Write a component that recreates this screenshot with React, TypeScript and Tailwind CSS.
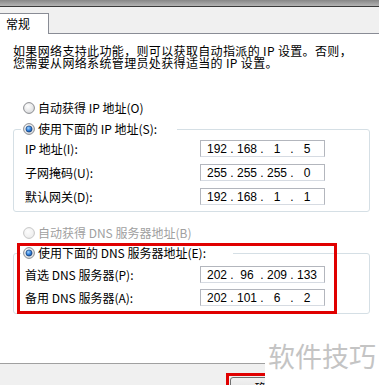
import React from "react";

const Radio = ({ checked, disabled }: { checked?: boolean; disabled?: boolean }) => (
  <svg width="12" height="12" viewBox="0 0 12 12" className="shrink-0">
    <defs>
      <radialGradient id="rbg" cx="0.4" cy="0.35" r="0.7">
        <stop offset="0" stopColor="#ffffff" />
        <stop offset="1" stopColor="#d9dadc" />
      </radialGradient>
      <radialGradient id="rbgd" cx="0.4" cy="0.35" r="0.7">
        <stop offset="0" stopColor="#fdfdfd" />
        <stop offset="1" stopColor="#ececec" />
      </radialGradient>
      <radialGradient id="rdot" cx="0.4" cy="0.35" r="0.7">
        <stop offset="0" stopColor="#9fd3ff" />
        <stop offset="0.6" stopColor="#2b7ad8" />
        <stop offset="1" stopColor="#174e9a" />
      </radialGradient>
    </defs>
    <circle
      cx="6"
      cy="6"
      r="5.4"
      fill={disabled ? "url(#rbgd)" : "url(#rbg)"}
      stroke={disabled ? "#c6c6c6" : "#8a8c90"}
      strokeWidth="1"
    />
    {checked && <circle cx="6" cy="6" r="3.1" fill="url(#rdot)" stroke="#1a3f72" strokeWidth="0.7" />}
  </svg>
);

const IpBox = ({ parts }: { parts: string[] }) => (
  <div className="w-[125px] h-[17px] border border-[#b3b6bd] border-b-[#d6dbe2] bg-white flex items-center pl-[4px] text-[12px] leading-none font-['Liberation_Sans',sans-serif] text-black">
    {parts.map((p, i) => (
      <React.Fragment key={i}>
        <span className="w-[24px] text-center">{p}</span>
        {i < 3 && <span className="w-[6px] text-center">.</span>}
      </React.Fragment>
    ))}
  </div>
);

const Row = ({ label, parts }: { label: string; parts: string[] }) => (
  <div className="flex items-center h-[17px]">
    <div className="w-[175px]">{label}</div>
    <IpBox parts={parts} />
  </div>
);

export default function App() {
  return (
    <div className="relative w-[379px] h-[385px] overflow-hidden bg-white flex flex-col font-['Noto_Sans_CJK_SC',sans-serif] text-[12px] leading-[16px] text-black">
      {/* window top edge */}
      <div className="h-[6px] bg-gradient-to-b from-[#878787] to-[#b4b4b4]" />
      <div className="h-[1px] bg-[#3a3a3a]" />
      {/* tab strip */}
      <div className="h-[27px] bg-[#f0f0f0] flex items-end">
        <div className="w-[49px] h-[21px] bg-white border-t border-r border-[#898c95] pl-[6px] flex items-center text-[12px]">
          常规
        </div>
        <div className="flex-1 h-full border-b border-[#898c95]" />
      </div>
      {/* content */}
      <div className="flex-1 px-[13px] pr-[9px]">
        <p className="mt-[11px] leading-[12px] tracking-[0.35px] whitespace-nowrap">
          如果网络支持此功能，则可以获取自动指派的 IP 设置。否则，
          <br />
          您需要从网络系统管理员处获得适当的 IP 设置。
        </p>
        <div className="mt-[31px] h-[16px] flex items-center gap-[3px] pl-[10px]">
          <Radio />
          <span>自动获得 IP 地址(O)</span>
        </div>
        <fieldset className="mt-[5px] border border-[#d5dfe5] rounded-[3px]">
          <legend className="ml-[7px] px-[2px] w-[156px]">
            <div className="h-[16px] flex items-center gap-[3px]">
              <Radio checked />
              <span>使用下面的 IP 地址(S):</span>
            </div>
          </legend>
          <div className="pl-[11px] pt-[3px] pb-[6px] flex flex-col gap-[7px]">
            <Row label="IP 地址(I):" parts={["192", "168", "1", "5"]} />
            <Row label="子网掩码(U):" parts={["255", "255", "255", "0"]} />
            <Row label="默认网关(D):" parts={["192", "168", "1", "1"]} />
          </div>
        </fieldset>
        <div className="mt-[13px] h-[16px] flex items-center gap-[3px] pl-[10px] text-[#a0a0a0]">
          <Radio disabled />
          <span>自动获得 DNS 服务器地址(B)</span>
        </div>
        <fieldset className="mt-[4px] border border-[#d5dfe5] rounded-[3px]">
          <legend className="ml-[7px] px-[2px] w-[212px]">
            <div className="h-[16px] flex items-center gap-[3px]">
              <Radio checked />
              <span>使用下面的 DNS 服务器地址(E):</span>
            </div>
          </legend>
          <div className="pl-[11px] pt-[5px] pb-[7px] flex flex-col gap-[6px]">
            <Row label="首选 DNS 服务器(P):" parts={["202", "96", "209", "133"]} />
            <Row label="备用 DNS 服务器(A):" parts={["202", "101", "6", "2"]} />
          </div>
        </fieldset>
      </div>
      {/* footer */}
      <div className="h-[22px] shrink-0 bg-[#f0f0f0] border-t border-[#a0a0a0] pl-[226px] pt-[9px]">
        <div className="border-[3px] border-[#e00000] w-[82px] h-[20px]">
          <div className="ml-[1px] mt-[1px] w-[73px] h-[22px] rounded-[3px] border border-[#707070] bg-gradient-to-b from-[#f2f2f2] to-[#dcdcdc] flex justify-center pt-[2px]">
            确定
          </div>
        </div>
      </div>

      {/* annotation: red highlight */}
      <div className="absolute left-[17px] top-[243px] w-[320px] h-[71px] border-[3px] border-[#e00000] pointer-events-none" />
      {/* watermark */}
      <div className="absolute left-[265px] top-[335px] right-0 bottom-0 bg-white">
        <div className="ml-[3px] mt-[7px] text-[27px] leading-[27px] text-[#c4c4c4]">软件技巧</div>
      </div>
    </div>
  );
}
